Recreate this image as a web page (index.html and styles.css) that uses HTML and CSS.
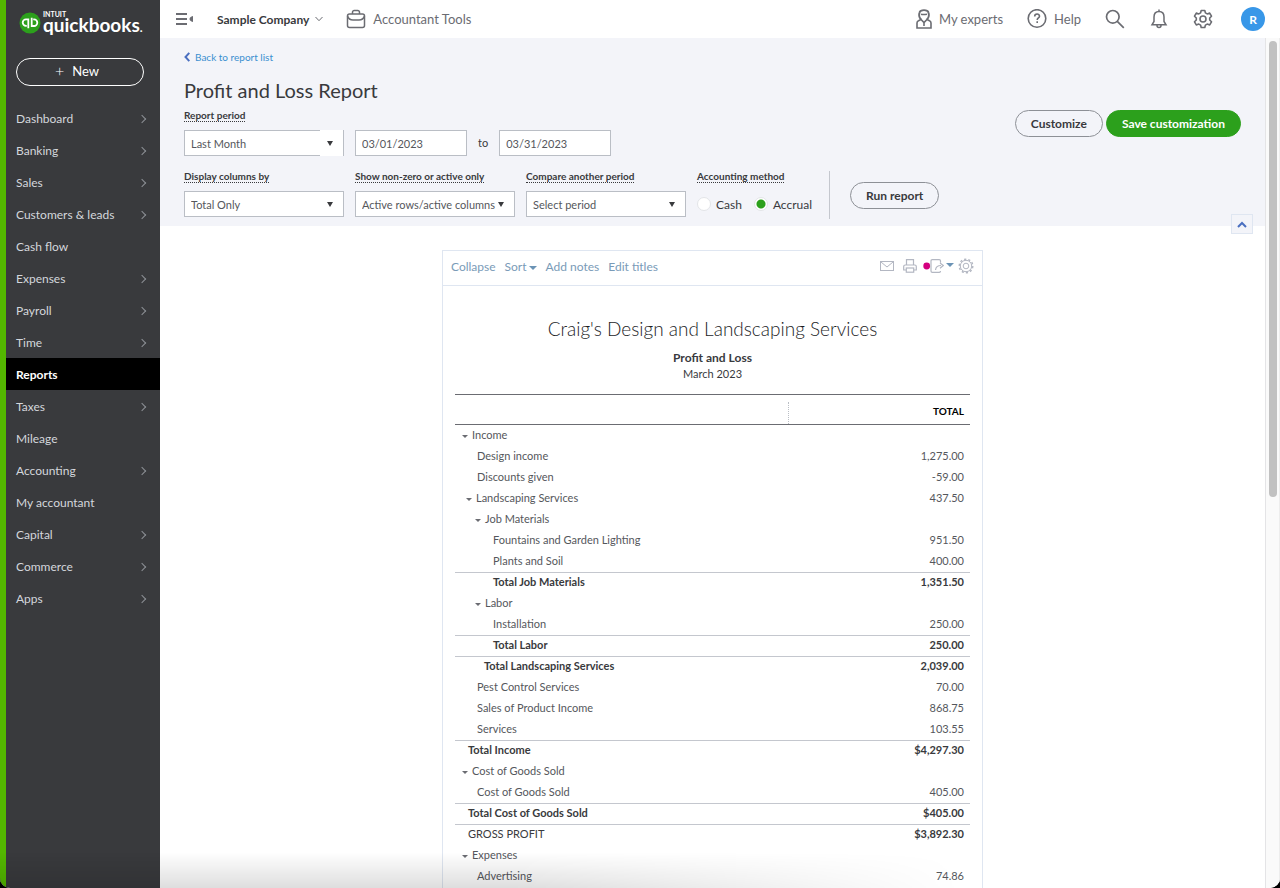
FILE: index.html
```html
<!DOCTYPE html>
<html lang="en">
<head>
    <meta charset="UTF-8">
    <meta name="viewport" content="width=device-width, initial-scale=1.0">
    <title>Profit and Loss Report</title>
    <link rel="stylesheet" href="styles.css">
</head>
<body>
<div class="app">
    <aside class="sidebar">
        <a class="logo" href="#">
            <svg width="22" height="22" viewBox="0 0 22 22" fill="none" stroke="#fff" stroke-width="1.8">
                <circle cx="11" cy="11" r="10.5" fill="#2ca01c" stroke="none"/>
                <path d="M9.3 16.200V7.300H7a3.300 3.300 0 0 0 0 6.600h.8"/>
                <path d="M12.700 5.800v8.200H15a3.300 3.300 0 0 0 0-6.600h-.8"/>
            </svg>
            <span class="logo-text"><small>INTUIT</small><b>quickbooks<i>.</i></b></span>
        </a>
        <button class="new-btn"><span class="plus">+</span>New</button>
        <nav>
            <a href="#" class="more">Dashboard</a>
            <a href="#" class="more">Banking</a>
            <a href="#" class="more">Sales</a>
            <a href="#" class="more">Customers &amp; leads</a>
            <a href="#">Cash flow</a>
            <a href="#" class="more">Expenses</a>
            <a href="#" class="more">Payroll</a>
            <a href="#" class="more">Time</a>
            <a href="#" class="active">Reports</a>
            <a href="#" class="more">Taxes</a>
            <a href="#">Mileage</a>
            <a href="#" class="more">Accounting</a>
            <a href="#">My accountant</a>
            <a href="#" class="more">Capital</a>
            <a href="#" class="more">Commerce</a>
            <a href="#" class="more">Apps</a>
        </nav>
    </aside>

    <div class="main">
        <header class="topbar">
            <button class="icon-btn" aria-label="Toggle menu">
                <svg width="18" height="14" viewBox="0 0 18 14" stroke="#6b6c72" stroke-width="1.800" fill="none">
                    <path d="M0 2h11M0 7h11M0 12h11"/>
                    <path d="M17 4v6q-3.500-1-3.500-3t3.500-3z" fill="#6b6c72" stroke="none"/>
                </svg>
            </button>
            <button class="company">Sample Company
                <svg width="8" height="6" viewBox="0 0 8 6" fill="none" stroke="#6b6c72"><path d="M.5 1L4 4.700 7.500 1"/></svg>
            </button>
            <a class="tool" href="#">
                <svg width="20" height="20" viewBox="0 0 20 20" fill="none" stroke="#6b6c72" stroke-width="1.500">
                    <rect x="1.500" y="5" width="17" height="13.500" rx="2"/>
                    <path d="M6.500 5V3.200A1.700 1.700 0 0 1 8.200 1.500h3.600a1.700 1.700 0 0 1 1.700 1.700V5M1.500 7c1 3 3 4 5.500 4h6c2.500 0 4.500-1 5.500-4"/>
                </svg>
                Accountant Tools
            </a>
            <div class="top-right">
                <a class="tool" href="#">
                    <svg width="16" height="20" viewBox="0 0 16 20" fill="none" stroke="#6b6c72" stroke-width="1.900">
                        <path d="M5 10.500C2.800 8 3 4.800 3.600 3.300 4.500.4 11.500.4 12.400 3.300c.6 1.500.8 4.700-1.400 7.200"/>
                        <path d="M5 5.200c2 .6 4 .3 6 0M5 10.500l-2.500 1.300Q1 12.500 1 14v5h14v-5q0-1.500-1.500-2.200L11 10.500l-3 3zM8 13.500V17" stroke-width="1.600"/>
                    </svg>
                    My experts
                </a>
                <a class="tool" href="#">
                    <svg width="20" height="20" viewBox="0 0 20 20" fill="none" stroke="#6b6c72" stroke-width="1.600">
                        <circle cx="10" cy="9.500" r="8.800"/>
                        <path d="M7.700 7.500c0-3.200 4.800-3.200 4.800-.3 0 1.800-2.300 1.800-2.300 3.800M10.200 12.300v1.600"/>
                    </svg>
                    Help
                </a>
                <button class="icon-btn" aria-label="Search">
                    <svg width="20" height="20" viewBox="0 0 20 20" fill="none" stroke="#6b6c72" stroke-width="1.700"><circle cx="7.800" cy="7.800" r="6.300"/><path d="M12.300 12.300l6.500 6.500"/></svg>
                </button>
                <button class="icon-btn" aria-label="Notifications">
                    <svg width="20" height="20" viewBox="0 0 20 20" fill="none" stroke="#6b6c72" stroke-width="1.500">
                        <path d="M10 2.500c-3.300 0-5 2.500-5 5.500v4.500L3 15.800h14l-2-3.300V8c0-3-1.700-5.500-5-5.500zM10 .5v2M8 16.500c0 2.600 4 2.600 4 0"/>
                    </svg>
                </button>
                <button class="icon-btn" aria-label="Settings">
                    <svg width="20" height="20" viewBox="0 0 20 20" fill="none" stroke="#6b6c72" stroke-width="1.600" stroke-linejoin="round">
                        <circle cx="10" cy="10" r="3"/>
                        <path d="M8.200 1.500h3.600l.6 2.400 1.800 1 2.500-.8 1.800 3.100-1.800 1.800v2l1.800 1.800-1.800 3.100-2.500-.8-1.800 1-.6 2.400H8.200l-.6-2.400-1.800-1-2.500.8-1.800-3.100L3.300 11V9L1.500 7.200l1.800-3.100 2.500.8 1.800-1z"/>
                    </svg>
                </button>
                <button class="avatar">R</button>
            </div>
        </header>

        <div class="body-row">
            <div class="content">
                <section class="filters">
                    <a class="back" href="#">
                        <svg width="6" height="10" viewBox="0 0 6 10" fill="none" stroke="#4a6fc0" stroke-width="2"><path d="M5.300 .8L1.500 5l3.800 4.200"/></svg>
                        Back to report list
                    </a>
                    <h1>Profit and Loss Report</h1>
                    <div class="row">
                        <div class="field combo">
                            <label for="period">Report period</label>
                            <select id="period"><option>Last Month</option></select>
                        </div>
                        <input class="date" type="text" value="03/01/2023" aria-label="From date">
                        <span class="to">to</span>
                        <input class="date" type="text" value="03/31/2023" aria-label="To date">
                        <div class="actions">
                            <button class="pill">Customize</button>
                            <button class="pill primary">Save customization</button>
                        </div>
                    </div>
                    <div class="row second">
                        <div class="field">
                            <label for="columns">Display columns by</label>
                            <select id="columns"><option>Total Only</option></select>
                        </div>
                        <div class="field">
                            <label for="nonzero">Show non-zero or active only</label>
                            <select id="nonzero"><option>Active rows/active columns</option></select>
                        </div>
                        <div class="field">
                            <label for="compare">Compare another period</label>
                            <select id="compare"><option>Select period</option></select>
                        </div>
                        <div class="field" role="radiogroup" aria-labelledby="method">
                            <span class="label" id="method">Accounting method</span>
                            <div class="radios">
                                <input type="radio" name="method" id="cash"><label for="cash">Cash</label>
                                <input type="radio" name="method" id="accrual" checked><label for="accrual">Accrual</label>
                            </div>
                        </div>
                        <div class="run"><button class="pill">Run report</button></div>
                    </div>
                    <button class="fold" aria-label="Hide filters">
                        <svg width="10" height="7" viewBox="0 0 10 7" fill="none" stroke="#4a6fc0" stroke-width="2"><path d="M1 6l4-4 4 4"/></svg>
                    </button>
                </section>

                <article class="paper">
                    <div class="paper-bar">
                        <a href="#">Collapse</a>
                        <a href="#" class="sort">Sort</a>
                        <a href="#">Add notes</a>
                        <a href="#">Edit titles</a>
                        <div class="paper-icons">
                            <button class="icon-btn" aria-label="Email">
                                <svg width="14" height="10" viewBox="0 0 14 10" fill="none" stroke="#b3b7c2"><rect x=".5" y=".5" width="13" height="9"/><path d="M1 1l6 5 6-5"/></svg>
                            </button>
                            <button class="icon-btn" aria-label="Print">
                                <svg width="14" height="14" viewBox="0 0 14 14" fill="none" stroke="#b3b7c2" stroke-width="1.200"><path d="M3.500 6V.7h7V6M3 11H.7V7.500Q.7 6 2.200 6h9.600q1.500 0 1.500 1.500V11H11"/><rect x="3.300" y="9" width="7.400" height="4.200"/></svg>
                            </button>
                            <button class="icon-btn export" aria-label="Export">
                                <svg width="21" height="14" viewBox="0 0 21 14" fill="none" stroke="#b3b7c2" stroke-width="1.200"><path d="M17.500 3.500V2q0-1.300-1.300-1.300H9.300Q8 .7 8 2v10q0 1.300 1.300 1.300h7q1.200 0 1.200-1.300M12.500 11c.3-3 2-4.500 5.500-4.500M17 4l3.300 2.500L17 9.300"/><circle cx="3.700" cy="7" r="3.400" fill="#d4007f" stroke="none"/></svg>
                            </button>
                            <button class="icon-btn" aria-label="Report settings">
                                <svg width="16" height="16" viewBox="0 0 16 16" fill="none" stroke="#b3b7c2"><circle cx="8" cy="8" r="2.800"/><circle cx="8" cy="8" r="5.700"/><circle cx="8" cy="8" r="6.800" stroke-width="1.400" stroke-dasharray="2.200 2.072"/></svg>
                            </button>
                        </div>
                    </div>
                    <h2>Craig's Design and Landscaping Services</h2>
                    <h3>Profit and Loss</h3>
                    <p class="span">March 2023</p>
                    <table>
                        <thead>
                            <tr><th></th><th class="total-head"><span>TOTAL</span></th></tr>
                        </thead>
                        <tbody>
                            <tr><td class="g0">Income</td><td></td></tr>
                            <tr><td class="l1">Design income</td><td>1,275.00</td></tr>
                            <tr><td class="l1">Discounts given</td><td>-59.00</td></tr>
                            <tr><td class="g1">Landscaping Services</td><td>437.50</td></tr>
                            <tr><td class="g2">Job Materials</td><td></td></tr>
                            <tr><td class="l3">Fountains and Garden Lighting</td><td>951.50</td></tr>
                            <tr><td class="l3">Plants and Soil</td><td>400.00</td></tr>
                            <tr class="sum"><td class="l3">Total Job Materials</td><td>1,351.50</td></tr>
                            <tr><td class="g2">Labor</td><td></td></tr>
                            <tr><td class="l3">Installation</td><td>250.00</td></tr>
                            <tr class="sum"><td class="l3">Total Labor</td><td>250.00</td></tr>
                            <tr class="sum"><td class="l2">Total Landscaping Services</td><td>2,039.00</td></tr>
                            <tr><td class="l1">Pest Control Services</td><td>70.00</td></tr>
                            <tr><td class="l1">Sales of Product Income</td><td>868.75</td></tr>
                            <tr><td class="l1">Services</td><td>103.55</td></tr>
                            <tr class="sum"><td class="l0">Total Income</td><td>$4,297.30</td></tr>
                            <tr><td class="g0">Cost of Goods Sold</td><td></td></tr>
                            <tr><td class="l1">Cost of Goods Sold</td><td>405.00</td></tr>
                            <tr class="sum"><td class="l0">Total Cost of Goods Sold</td><td>$405.00</td></tr>
                            <tr class="sum gross"><td class="l0">GROSS PROFIT</td><td>$3,892.30</td></tr>
                            <tr><td class="g0">Expenses</td><td></td></tr>
                            <tr><td class="l1">Advertising</td><td>74.86</td></tr>
                        </tbody>
                    </table>
                </article>
            </div>
            <div class="track"><div class="thumb"></div></div>
        </div>
    </div>
</div>
</body>
</html>
```
FILE: styles.css
```css
* {
    box-sizing: border-box;
}

body {
    margin: 0;
    background: #000;
    font-family: Lato, 'Open Sans', sans-serif;
    font-size: 12px;
    color: #393a3d;
}

a {
    color: inherit;
    text-decoration: none;
}

button {
    font-family: inherit;
    cursor: pointer;
}

svg {
    display: block;
    flex: none;
}

.app {
    position: relative;
    display: flex;
    height: 100vh;
    overflow: hidden;
    background: #fff;
    border-radius: 0 0 10px 10px;
}

/* soft shade along the bottom of the window */
.app::after {
    content: "";
    position: absolute;
    left: 0;
    right: 0;
    bottom: 0;
    height: 36px;
    background: linear-gradient(rgba(0, 0, 0, 0), rgba(0, 0, 0, 0.13));
    -webkit-mask-image: linear-gradient(to right, #000 40%, transparent 75%);
    mask-image: linear-gradient(to right, #000 40%, transparent 75%);
    pointer-events: none;
}

/* Sidebar */
.sidebar {
    flex: none;
    width: 160px;
    background: #393a3d;
    border-left: 6px solid #53b700;
    color: #d4d7dc;
}

.logo {
    display: flex;
    align-items: center;
    gap: 2px;
    height: 46px;
    padding-left: 13px;
    color: #fff;
}

.logo-text {
    display: flex;
    flex-direction: column;
    gap: 2px;
}

.logo-text small {
    font-size: 7px;
    line-height: 4px;
    font-weight: 700;
}

.logo-text b {
    font-size: 19px;
    line-height: 14px;
    font-weight: 700;
}

.logo-text i {
    font-size: 12px;
    font-style: normal;
}

.new-btn {
    display: flex;
    align-items: center;
    justify-content: center;
    gap: 8px;
    width: 128px;
    height: 28px;
    margin: 12px 0 16px 10px;
    padding: 0 6px 2px 0;
    background: none;
    border: 1px solid #fff;
    border-radius: 14px;
    color: #fff;
    font-size: 13px;
}

.plus {
    font-size: 16px;
    font-weight: 300;
    line-height: 16px;
}

nav a {
    display: flex;
    align-items: center;
    justify-content: space-between;
    height: 32px;
    padding: 1px 15px 0 10px;
}

nav .more::after {
    content: "";
    width: 5px;
    height: 5px;
    border: solid #8d9096;
    border-width: 1px 1px 0 0;
    transform: rotate(45deg);
}

nav .active {
    background: #000;
    color: #fff;
    font-weight: 700;
}

/* Top bar */
.main {
    flex: 1;
    display: flex;
    flex-direction: column;
    min-width: 0;
}

.topbar {
    flex: none;
    display: flex;
    align-items: center;
    height: 38px;
    padding: 0 15px 0 16px;
}

.icon-btn {
    padding: 0;
    border: 0;
    background: none;
}

.company {
    display: flex;
    align-items: center;
    gap: 6px;
    margin: 0 23px;
    padding: 0;
    border: 0;
    background: none;
    font-size: 12px;
    font-weight: 700;
    color: #393a3d;
}

.tool {
    display: flex;
    align-items: center;
    gap: 7px;
    font-size: 13px;
    color: #6b6c72;
}

.top-right {
    display: flex;
    align-items: center;
    gap: 24px;
    margin-left: auto;
}

.avatar {
    width: 24px;
    height: 24px;
    margin-left: 4px;
    padding: 0;
    border: 0;
    border-radius: 50%;
    background: #3897e8;
    color: #fff;
    font-size: 12px;
    font-weight: 700;
}

.body-row {
    flex: 1;
    display: flex;
    min-height: 0;
}

.content {
    flex: 1;
    overflow: hidden;
}

.track {
    flex: none;
    width: 15px;
    padding: 3px;
    background: #fafafa;
    border-left: 1px solid #e4e4e6;
    border-right: 1px solid #ededed;
}

.thumb {
    width: 8px;
    height: 54%;
    border-radius: 4px;
    background: #c1c1c1;
}

/* Report filters */
.filters {
    position: relative;
    padding: 11px 24px 9px;
    background: #f3f4f9;
}

.back {
    display: flex;
    align-items: center;
    gap: 5px;
    height: 16px;
    font-size: 10px;
    color: #3a8fd0;
}

h1 {
    margin: 12px 0 7px;
    font-size: 20px;
    line-height: 26px;
    font-weight: 400;
}

.row {
    display: flex;
    align-items: flex-end;
    gap: 11px;
}

.second {
    margin-top: 15px;
}

.field {
    display: flex;
    flex-direction: column;
    align-items: flex-start;
    gap: 8px;
}

.field > label,
.label {
    font-size: 10px;
    line-height: 11px;
    font-weight: 700;
    border-bottom: 1px dotted #393a3d;
}

select,
.date {
    height: 26px;
    padding: 0 6px;
    border: 1px solid #babec5;
    border-radius: 0;
    background: #fff;
    font-family: inherit;
    font-size: 11px;
    color: #55575c;
}

select {
    width: 160px;
    appearance: none;
    background: #fff url("data:image/svg+xml,%3Csvg xmlns='http://www.w3.org/2000/svg' width='6' height='5'%3E%3Cpath d='M0 0h6L3 5z' fill='%23393a3d'/%3E%3C/svg%3E") no-repeat right 10px center;
}

.date {
    width: 112px;
}

/* the combo arrow sits on its own borderless box */
.combo {
    position: relative;
}

.combo::after {
    content: "";
    position: absolute;
    right: 1px;
    bottom: 0;
    width: 23px;
    height: 26px;
    background: #fff url("data:image/svg+xml,%3Csvg xmlns='http://www.w3.org/2000/svg' width='6' height='5'%3E%3Cpath d='M0 0h6L3 5z' fill='%23393a3d'/%3E%3C/svg%3E") no-repeat right 10px center;
    pointer-events: none;
}

.to {
    font-size: 11px;
    line-height: 26px;
}

.actions {
    display: flex;
    gap: 3px;
    margin-left: auto;
    margin-bottom: 19px;
}

.pill {
    height: 27px;
    padding: 0 15px;
    border: 1px solid #8d9096;
    border-radius: 14px;
    background: none;
    font-size: 12px;
    font-weight: 700;
    color: #393a3d;
}

.primary {
    border-color: #2ca01c;
    background: #2ca01c;
    color: #fff;
}

.radios {
    display: flex;
    align-items: center;
    gap: 5px;
    height: 26px;
}

.radios input {
    appearance: none;
    width: 14px;
    height: 14px;
    margin: 0;
    border: 1px solid #e3e5e8;
    border-radius: 50%;
    background: #fff;
}

.radios input:checked {
    background: radial-gradient(circle, #2ca01c 4px, #fff 5px);
}

.radios label + input {
    margin-left: 7px;
}

.run {
    display: flex;
    align-items: center;
    height: 48px;
    margin: 0 0 -2px 6px;
    padding-left: 20px;
    border-left: 1px solid #c4c7ce;
}

.fold {
    position: absolute;
    right: 12px;
    bottom: -8px;
    display: flex;
    align-items: center;
    justify-content: center;
    width: 22px;
    height: 20px;
    padding: 0;
    background: #f3f4f9;
    border: 1px solid #dfe6f1;
}

/* Report */
.paper {
    width: 541px;
    margin: 24px auto 0;
    padding: 0 12px 24px;
    border: 1px solid #dfe6f1;
    text-align: center;
}

.paper-bar {
    display: flex;
    align-items: center;
    gap: 9px;
    height: 35px;
    margin: 0 -12px;
    padding: 0 8px 4px;
    border-bottom: 1px solid #dfe6f1;
    color: #7a9bb8;
}

.sort::after {
    content: "";
    display: inline-block;
    margin: 0 0 1px 2px;
    border: 4px solid transparent;
    border-top-color: #6b93b5;
    border-bottom: 0;
}

.paper-icons {
    display: flex;
    align-items: center;
    gap: 9px;
    margin-left: auto;
}

.export {
    display: flex;
    gap: 2px;
    margin: 0 -5px 0 -3px;
}

.export::after {
    content: "";
    margin-top: 4px;
    border: 4px solid transparent;
    border-top-color: #6b93b5;
    border-bottom: 0;
    height: 0;
}

h2 {
    margin: 30px 0 8px;
    font-size: 19px;
    line-height: 26px;
    font-weight: 300;
    color: #1c1d1f;
}

h3,
.span {
    margin: 0;
    font-size: 12px;
    line-height: 16px;
}

.span {
    margin-bottom: 12px;
    font-size: 11px;
}

table {
    width: 100%;
    border-spacing: 0;
    font-size: 11px;
    color: #55575c;
    text-align: left;
}

th {
    height: 31px;
    padding: 7px 0 0;
    border: solid #6b6c72;
    border-width: 1px 0;
    color: #000;
    font-size: 10px;
    font-weight: 700;
}

.total-head {
    width: 182px;
    text-align: right;
}

.total-head span {
    display: block;
    height: 22px;
    padding-right: 6px;
    border-left: 1px dotted #babec5;
    line-height: 19px;
}

td {
    height: 21px;
    padding: 0 0 3px;
}

td:last-child {
    padding-right: 6px;
    text-align: right;
}

.sum td {
    border-top: 1px solid #c4c7ce;
    color: #393a3d;
    font-weight: 700;
}

.sum.gross td:first-child {
    font-weight: 400;
}

.l0 { padding-left: 13px; }
.l1 { padding-left: 22px; }
.l2 { padding-left: 29px; }
.l3 { padding-left: 38px; }
.g0 { padding-left: 7px; }
.g1 { padding-left: 11px; }
.g2 { padding-left: 20px; }

.g0::before,
.g1::before,
.g2::before {
    content: "";
    display: inline-block;
    margin: 0 4px 1px 0;
    border: 3px solid transparent;
    border-top-color: #6b6c72;
    border-bottom: 0;
}
```
